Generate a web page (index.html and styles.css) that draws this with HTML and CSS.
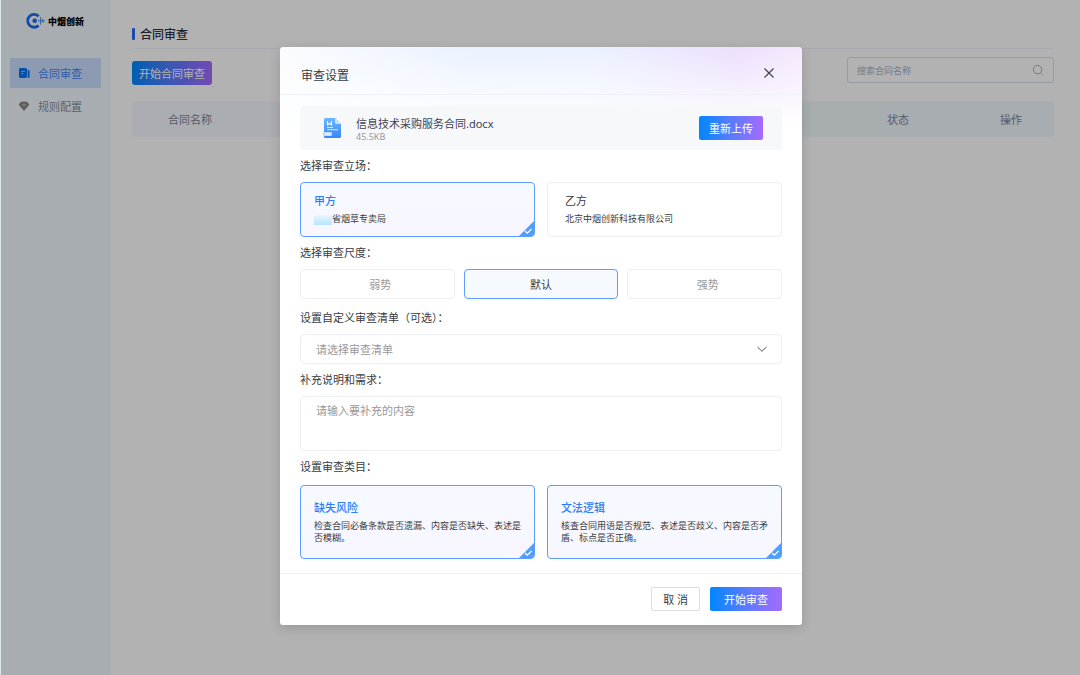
FILE: index.html
```html
<!DOCTYPE html>
<html lang="zh-CN">
<head>
    <meta charset="UTF-8">
    <meta name="viewport" content="width=device-width, initial-scale=1.0">
    <title>合同审查</title>
    <link rel="stylesheet" href="styles.css">
</head>
<body>

    <div class="page">
        <!-- Sidebar -->
        <aside class="sidebar">
            <div class="logo">
                <svg width="20" height="18" viewBox="0 0 20 18">
                    <path d="M12.6 4.3A6.400 6.400 0 1 0 12.600 13.400" fill="none" stroke="#1a6cea" stroke-width="2.800"/>
                    <circle cx="8.700" cy="8.800" r="2.300" fill="#1a6cea"/>
                    <path d="M12 8.800h6.800M14.600 5v7.600M16.800 7v3.600" fill="none" stroke="#3e8cf5" stroke-width="1.200" stroke-dasharray="1.600 .5"/>
                </svg>
                <span>中烟创新</span>
            </div>
            <nav class="menu">
                <a href="#" class="menu-item active">
                    <svg width="12" height="12" viewBox="0 0 12 12">
                        <rect x="1" y="1" width="8" height="10" rx="1.4" fill="#0a72f0"/>
                        <path d="M9.700 3h1c.5 0 .9.4.9.9v6.200c0 .5-.4.9-.9.9h-1z" fill="#0a72f0"/>
                        <path d="M3 4.500h4M3 6.700h2.400" stroke="#9cc4fb" stroke-width=".9"/>
                    </svg>
                    <span>合同审查</span>
                </a>
                <a href="#" class="menu-item">
                    <svg width="12" height="12" viewBox="0 0 12 12">
                        <path d="M3 2h6l2 3-5 5.4L1 5z" fill="#85857f" stroke="#85857f" stroke-width=".6" stroke-linejoin="round"/>
                        <path d="M4 5h4" fill="none" stroke="#cfd5d8" stroke-width=".9"/>
                    </svg>
                    <span>规则配置</span>
                </a>
            </nav>
        </aside>

        <!-- Contract list -->
        <main class="content">
            <h1 class="page-title">合同审查</h1>
            <div class="toolbar">
                <button type="button" class="btn btn-primary btn-start">开始合同审查</button>
                <div class="search">
                    <input type="text" placeholder="搜索合同名称" aria-label="搜索合同名称">
                    <svg width="12" height="12" viewBox="0 0 12 12" fill="none" stroke="#a3b0c6" stroke-width="1">
                        <circle cx="5.6" cy="5.6" r="4.2"/>
                        <path d="M8.6 8.8l1.9 1.9"/>
                    </svg>
                </div>
            </div>
            <table class="contracts">
                <thead>
                    <tr>
                        <th class="col-name">合同名称</th>
                        <th class="col-status">状态</th>
                        <th class="col-action">操作</th>
                    </tr>
                </thead>
            </table>
        </main>

        <!-- Review settings -->
        <div class="overlay">
            <form class="modal" role="dialog" aria-labelledby="modal-title">
                <header class="modal-header">
                    <h2 id="modal-title">审查设置</h2>
                    <button type="button" class="close" aria-label="关闭">
                        <svg width="12" height="12" viewBox="0 0 12 12" fill="none" stroke="#3c3f46" stroke-width="1.1">
                            <path d="M1.5 1.5l9 9M10.5 1.5l-9 9"/>
                        </svg>
                    </button>
                </header>

                <div class="modal-body">
                    <div class="file">
                        <svg width="20" height="22" viewBox="0 0 20 22">
                            <defs>
                                <linearGradient id="doc" x1="0" y1="0" x2="0" y2="1">
                                    <stop offset="0" stop-color="#6db8ff"/>
                                    <stop offset="1" stop-color="#3a86fa"/>
                                </linearGradient>
                            </defs>
                            <path d="M3.5 1H13l6 6v12.500a1.500 1.500 0 0 1-1.500 1.500h-14A1.500 1.500 0 0 1 2 19.500v-17A1.500 1.500 0 0 1 3.500 1z" fill="url(#doc)"/>
                            <path d="M13 1l6 6h-4.500A1.500 1.500 0 0 1 13 5.500z" fill="#c6e2ff"/>
                            <path d="M5.500 4v4l2-1.500 2 1.500V4" fill="none" stroke="#fff" stroke-width="1.100"/>
                            <path d="M5 10.500h6M5 12.700h11" stroke="#d6eaff" stroke-width="1"/>
                            <rect x="1" y="15" width="9" height="4" rx="1" fill="#b9dcff"/>
                            <path d="M3 17h5" stroke="#fff" stroke-width="1.400" stroke-dasharray="1.300 .5"/>
                        </svg>
                        <div class="file-info">
                            <p class="file-name">信息技术采购服务合同.docx</p>
                            <p class="file-size">45.5KB</p>
                        </div>
                        <button type="button" class="btn btn-primary">重新上传</button>
                    </div>

                    <fieldset>
                        <legend>选择审查立场：</legend>
                        <div class="cards">
                            <label class="card">
                                <input type="radio" name="side" checked>
                                <strong>甲方</strong>
                                <span class="card-text"><i class="mask"></i>省烟草专卖局</span>
                                <svg class="tick" width="16" height="16" viewBox="0 0 16 16"><path d="M16 1v15H1z" fill="#4f9dff"/><path d="M7 11l2.300 2.200 4.200-4.200" fill="none" stroke="#fff" stroke-width="1.300"/></svg>
                            </label>
                            <label class="card">
                                <input type="radio" name="side">
                                <strong>乙方</strong>
                                <span class="card-text">北京中烟创新科技有限公司</span>
                            </label>
                        </div>
                    </fieldset>

                    <fieldset>
                        <legend>选择审查尺度：</legend>
                        <div class="levels">
                            <label class="level"><input type="radio" name="level">弱势</label>
                            <label class="level"><input type="radio" name="level" checked>默认</label>
                            <label class="level"><input type="radio" name="level">强势</label>
                        </div>
                    </fieldset>

                    <div class="field field-list">
                        <label for="checklist">设置自定义审查清单（可选）：</label>
                        <div class="select-wrap">
                            <select id="checklist">
                                <option>请选择审查清单</option>
                            </select>
                            <svg width="12" height="12" viewBox="0 0 12 12" fill="none" stroke="#55585e" stroke-width="1">
                                <path d="M1.500 4L6 8.300 10.500 4"/>
                            </svg>
                        </div>
                    </div>

                    <div class="field">
                        <label for="remark">补充说明和需求：</label>
                        <textarea id="remark" placeholder="请输入要补充的内容"></textarea>
                    </div>

                    <fieldset>
                        <legend>设置审查类目：</legend>
                        <div class="cards cards-category">
                            <label class="card">
                                <input type="checkbox" checked>
                                <strong>缺失风险</strong>
                                <span class="card-text">检查合同必备条款是否遗漏、内容是否缺失、表述是否模糊。</span>
                                <svg class="tick" width="16" height="16" viewBox="0 0 16 16"><path d="M16 1v15H1z" fill="#4f9dff"/><path d="M7 11l2.300 2.200 4.200-4.200" fill="none" stroke="#fff" stroke-width="1.300"/></svg>
                            </label>
                            <label class="card">
                                <input type="checkbox" checked>
                                <strong>文法逻辑</strong>
                                <span class="card-text">核查合同用语是否规范、表述是否歧义、内容是否矛盾、标点是否正确。</span>
                                <svg class="tick" width="16" height="16" viewBox="0 0 16 16"><path d="M16 1v15H1z" fill="#4f9dff"/><path d="M7 11l2.300 2.200 4.200-4.200" fill="none" stroke="#fff" stroke-width="1.300"/></svg>
                            </label>
                        </div>
                    </fieldset>
                </div>

                <footer class="modal-footer">
                    <button type="button" class="btn btn-default">取 消</button>
                    <button type="submit" class="btn btn-primary">开始审查</button>
                </footer>
            </form>
        </div>
    </div>

</body>
</html>
```
FILE: styles.css
```css
:root {
    --primary-color: #2b7fff;
    --active-border: #5c9dff;
    --border-color: #eceef1;
    --text-color: #383b41;
    --text-light: #999999;
    --gradient: linear-gradient(90deg, #0088ff, #5a7bff 50%, #a56bff);
}

* {
    margin: 0;
    padding: 0;
    box-sizing: border-box;
}

body,
button,
input,
select,
textarea {
    font-family: "Noto Sans", "Noto Sans CJK SC", sans-serif;
    font-size: 11px;
    color: var(--text-color);
}

.page {
    position: relative;
    display: flex;
    min-height: 100vh;
    border-left: 1px solid #dde7ec;
    background-color: #ffffff;
}

/* Sidebar */
.sidebar {
    width: 110px;
    padding: 10px 10px 0 9px;
    background-color: #f0f8fe;
}

.logo {
    display: flex;
    align-items: center;
    gap: 2px;
    height: 22px;
    margin-bottom: 26px;
    padding-left: 16px;
    font-size: 9px;
    font-weight: 900;
    color: #000000;
}

.menu {
    display: flex;
    flex-direction: column;
    gap: 3px;
}

.menu-item {
    display: flex;
    align-items: center;
    gap: 8px;
    height: 30px;
    padding-left: 8px;
    border-radius: 1px;
    color: #868e9b;
    text-decoration: none;
}

.menu-item.active {
    background-color: #cadeff;
    color: #3f83f2;
}

/* Contract list */
.content {
    flex: 1;
    padding: 20px 26px 0 21px;
}

.page-title {
    display: flex;
    align-items: center;
    gap: 5px;
    height: 29px;
    border-bottom: 1px solid #f0f3fa;
    font-size: 12px;
    font-weight: 500;
    color: #2a3145;
}

.page-title::before {
    content: "";
    width: 3px;
    height: 12px;
    border-radius: 1px;
    background-color: #2a6cf0;
}

.toolbar {
    display: flex;
    justify-content: space-between;
    height: 28px;
    margin: 8px 0 16px;
}

.btn {
    height: 24px;
    padding: 0 10px;
    border: none;
    border-radius: 2px;
    cursor: pointer;
}

.btn-primary {
    background: var(--gradient);
    color: #ffffff;
}

.btn-default {
    border: 1px solid #dcdee2;
    background-color: #ffffff;
}

.btn-start {
    align-self: flex-end;
    padding: 0 7px;
    border-radius: 3px;
}

.search {
    display: flex;
    align-items: center;
    width: 207px;
    height: 26px;
    padding: 0 9px;
    border: 1px solid #d6dfee;
    border-radius: 3px;
}

.search input {
    flex: 1;
    min-width: 0;
    border: none;
    outline: none;
    background: none;
    font-size: 9px;
}

.search input::placeholder {
    color: #a3b0c6;
}

.contracts {
    width: 100%;
    table-layout: fixed;
    border-collapse: collapse;
    border-radius: 3px;
    background: linear-gradient(90deg, #f5f8ff, #f0f8fc);
}

.contracts th {
    height: 36px;
    font-weight: 400;
    color: #7c8496;
}

.contracts .col-name {
    padding-left: 36px;
    text-align: left;
}

.contracts .col-status {
    width: 140px;
}

.contracts .col-action {
    width: 86px;
}

/* Modal */
.overlay {
    position: absolute;
    inset: 0;
    display: flex;
    justify-content: center;
    align-items: flex-start;
    padding: 47px 15px 0 16px;
    background-color: rgba(0, 0, 0, 0.3);
}

.modal {
    width: 100%;
    max-width: 522px;
    border-radius: 3px;
    background:
        linear-gradient(rgba(255, 255, 255, 0), #ffffff 80px),
        linear-gradient(90deg, #fafcff, #ebf2ff 35%, #ebf1ff 60%, #ecdffd 88%, #f4e8fd);
    box-shadow: 0 3px 12px rgba(0, 0, 0, 0.15);
}

.modal-header {
    display: flex;
    justify-content: space-between;
    align-items: center;
    height: 48px;
    padding: 8px 27px 0 21px;
    border-bottom: 1px solid #f0f1f6;
}

.modal-header h2 {
    font-size: 12px;
    font-weight: 400;
}

.close {
    display: flex;
    margin-bottom: 4px;
    border: none;
    background: none;
    cursor: pointer;
}

.modal-body {
    padding: 11px 20px 14px;
}

.file {
    display: flex;
    align-items: center;
    height: 44px;
    padding: 0 19px 0 22px;
    border-radius: 4px;
    background-color: #f6f8fa;
}

.file-info {
    flex: 1;
    padding: 3px 0 0 14px;
}

.file-name {
    line-height: 14px;
    color: #3b4256;
}

.file-size {
    font-size: 9px;
    line-height: 12px;
    color: var(--text-light);
}

fieldset {
    border: none;
}

legend,
.field > label {
    display: block;
    line-height: 32px;
}

.field-list {
    padding-top: 3px;
}

.cards,
.levels {
    display: grid;
    grid-template-columns: 1fr 1fr;
    gap: 12px;
}

.levels {
    grid-template-columns: 1fr 1fr 1fr;
    gap: 9px;
}

.cards-category {
    padding-top: 2px;
}

.card,
.level {
    position: relative;
    border: 1px solid var(--border-color);
    border-radius: 4px;
    cursor: pointer;
}

.card {
    display: flex;
    flex-direction: column;
    min-height: 55px;
    padding: 9px 12px 8px 17px;
    overflow: hidden;
}

.cards-category .card {
    min-height: 74px;
    padding-top: 13px;
}

.card input,
.level input {
    position: absolute;
    opacity: 0;
}

.card:has(input:checked) {
    padding-left: 13px;
    border-color: var(--active-border);
    background: linear-gradient(#f6faff, #f8f6ff);
}

.card strong {
    font-weight: 400;
    line-height: 18px;
}

.card:has(input:checked) strong {
    font-weight: 500;
    color: var(--primary-color);
}

.card-text {
    font-size: 9px;
    line-height: 12px;
    padding-top: 3px;
}

.mask {
    display: inline-block;
    width: 18px;
    height: 10px;
    vertical-align: bottom;
    background: linear-gradient(#e8f7ff, #b5e5fc);
}

.tick {
    position: absolute;
    right: 0;
    bottom: 0;
}

.level {
    display: flex;
    justify-content: center;
    align-items: center;
    height: 30px;
    padding-left: 6px;
    color: var(--text-light);
}

.level:has(input:checked) {
    padding-left: 0;
    border-color: var(--active-border);
    background-color: #f6faff;
    color: var(--text-color);
}

.select-wrap {
    display: flex;
    align-items: center;
    height: 30px;
    padding: 0 13px 0 15px;
    border: 1px solid var(--border-color);
    border-radius: 4px;
}

.select-wrap select {
    flex: 1;
    appearance: none;
    border: none;
    outline: none;
    background: none;
    color: var(--text-light);
}

textarea {
    display: block;
    width: 100%;
    height: 55px;
    padding: 5px 15px;
    border: 1px solid var(--border-color);
    border-radius: 4px;
    resize: none;
}

textarea::placeholder {
    color: var(--text-light);
}

.modal-footer {
    display: flex;
    justify-content: flex-end;
    gap: 10px;
    padding: 13px 20px 14px;
    border-top: 1px solid #eeeeee;
}

.modal-footer .btn-default {
    padding: 0 11px;
}

.modal-footer .btn-primary {
    padding: 0 14px;
}
```
